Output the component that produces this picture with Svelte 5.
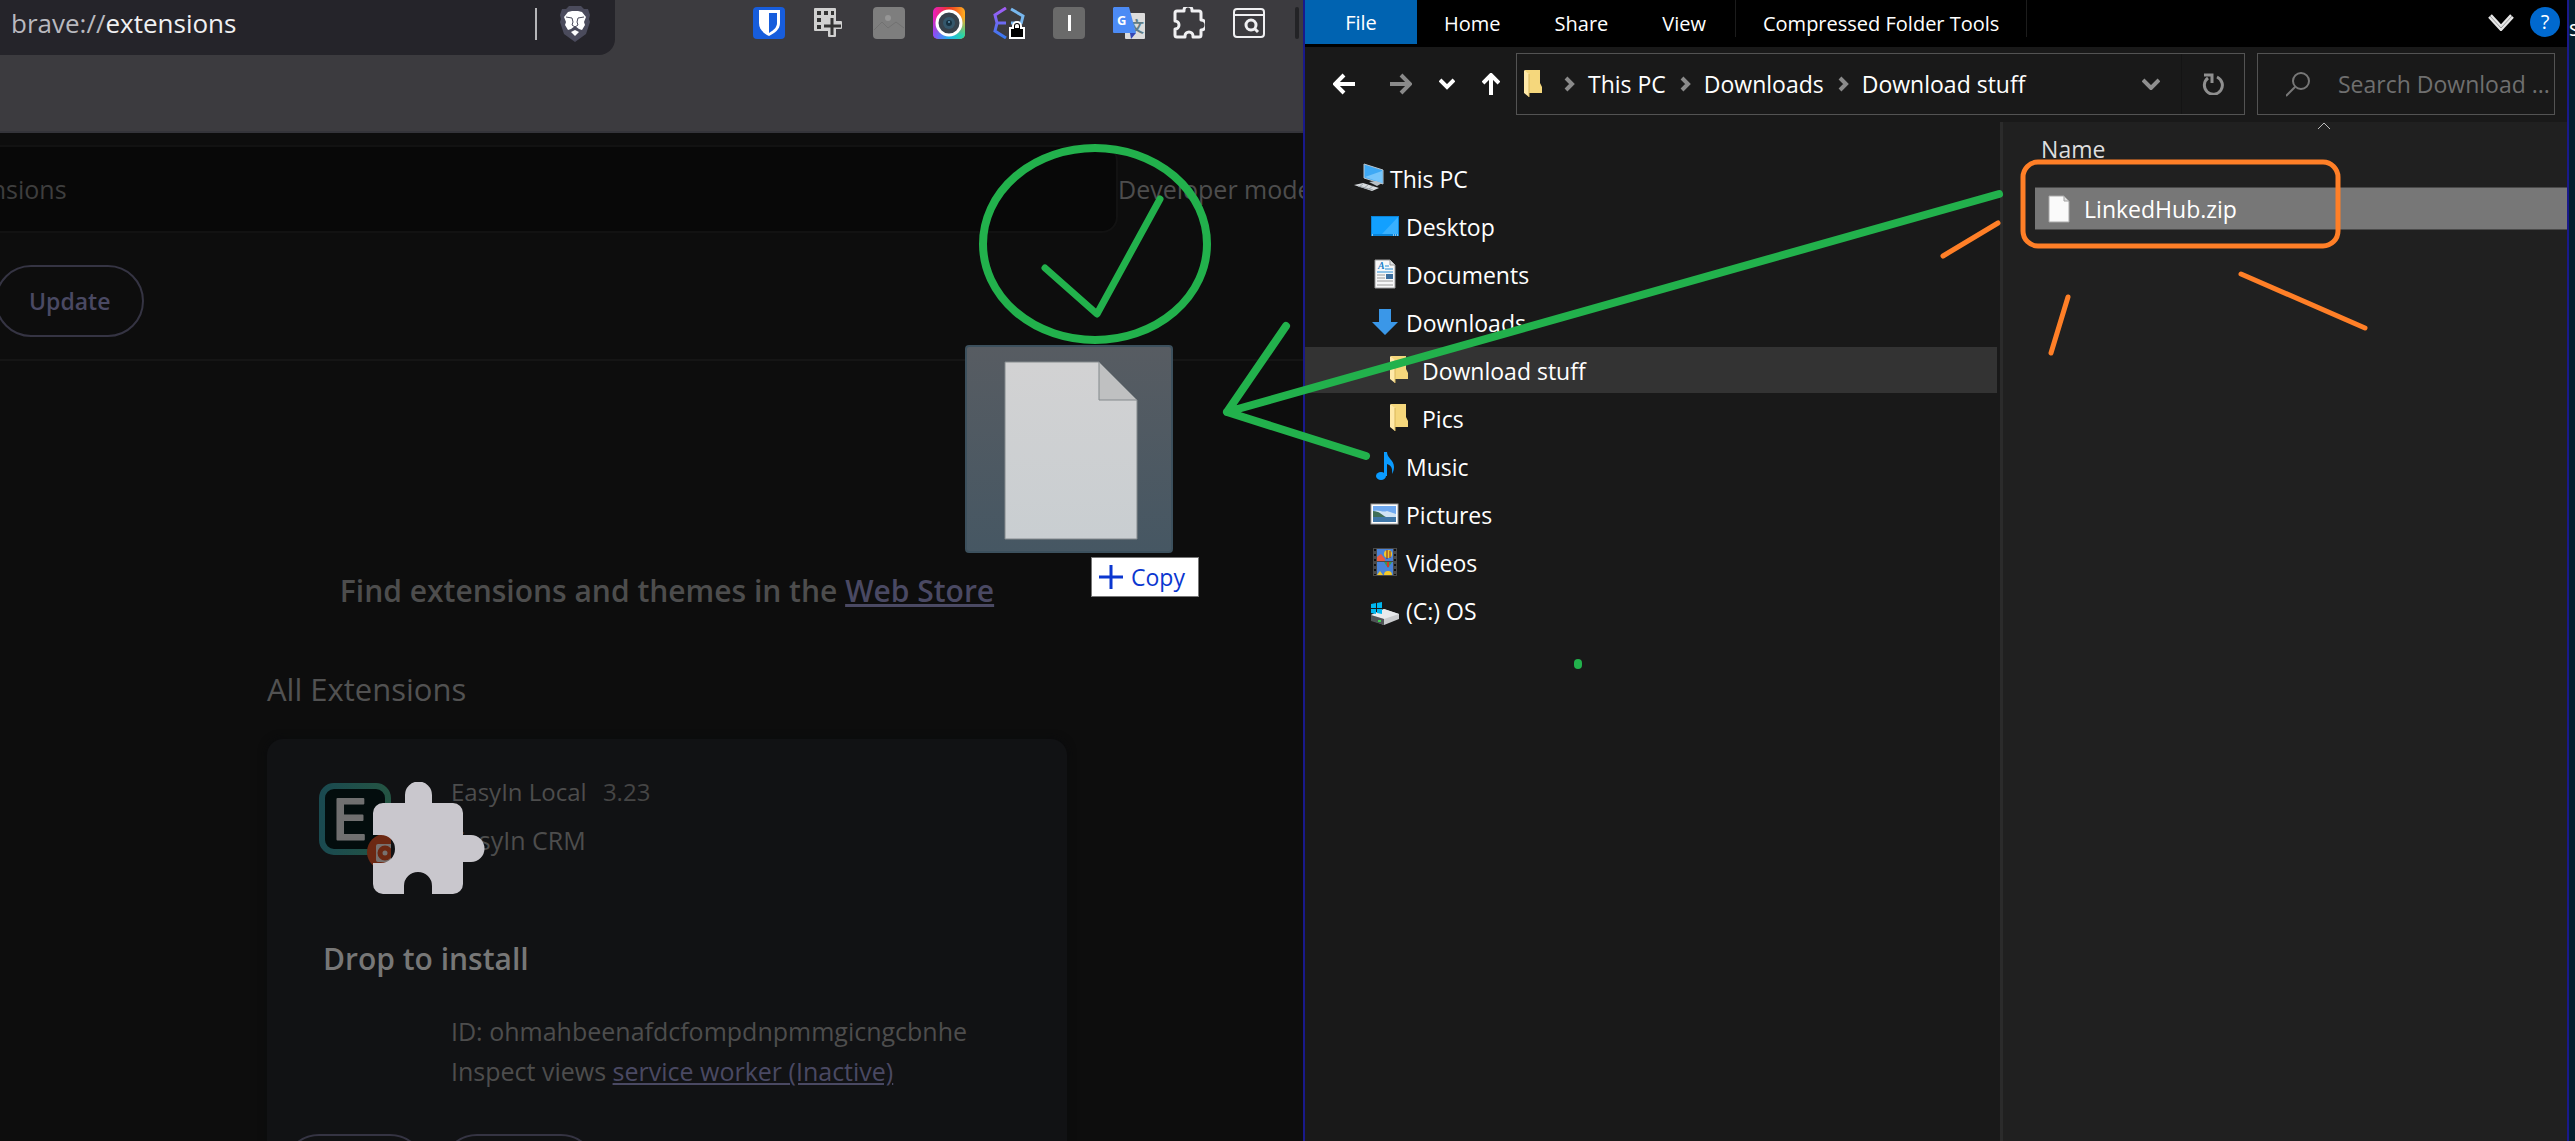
<script lang="ts">
	type TreeItem = { label: string; icon: string; level: number; selected?: boolean };

	const tree: TreeItem[] = [
		{ label: 'This PC', icon: 'pc', level: 0 },
		{ label: 'Desktop', icon: 'desktop', level: 1 },
		{ label: 'Documents', icon: 'documents', level: 1 },
		{ label: 'Downloads', icon: 'downloads', level: 1 },
		{ label: 'Download stuff', icon: 'folder', level: 2, selected: true },
		{ label: 'Pics', icon: 'folder', level: 2 },
		{ label: 'Music', icon: 'music', level: 1 },
		{ label: 'Pictures', icon: 'pictures', level: 1 },
		{ label: 'Videos', icon: 'videos', level: 1 },
		{ label: '(C:) OS', icon: 'drive', level: 1 }
	];

	const crumbs = ['This PC', 'Downloads', 'Download stuff'];
	const extensions = ['vault', 'select', 'image', 'camera', 'lock', 'bar', 'translate', 'puzzle', 'search'];
</script>

{#snippet folder()}
	<svg class="folder" width="18" height="28" viewBox="0 0 18 28">
		<path d="M1 0h15v13l2 4v6H1z" fill="#f5d77c" />
		<path d="M0 0l5 4v23l-5-4z" fill="#ffe9a8" />
		<path d="M5 4v23" stroke="#d9b75a" stroke-width="1" />
	</svg>
{/snippet}

{#snippet extensionIcon(name: string)}
	<svg width="32" height="32" viewBox="0 0 32 32" fill="none">
		{#if name === 'vault'}
			<rect width="32" height="32" rx="4" fill="#175ddc" />
			<path d="M6 3h21v13c0 6-5 10-11 13C10 26 6 22 6 16z" fill="#fff" />
			<path d="M16 6h8v10c0 4-3 7-8 10z" fill="#175ddc" />
		{:else if name === 'select'}
			<path d="M2 2h20v13h6v6h-6v8h-6v-6H2z" fill="#d0d0d0" stroke="#d0d0d0" stroke-width="2" stroke-linejoin="round" />
			<path d="M4 4h4v4H4zM11 4h4v4h-4zM18 4h3v4h-3zM4 11h4v4H4zM4 18h4v4H4z" fill="#333" />
			<path d="M19 11v17M11 19h17" stroke="#333" stroke-width="3" />
		{:else if name === 'image'}
			<rect width="32" height="32" rx="4" fill="#7e7e7e" />
			<circle cx="15" cy="11" r="3" fill="#969696" />
			<path d="M1 23l8-8 6 6 8-6 8 6" stroke="#717171" />
		{:else if name === 'camera'}
			<defs>
				<linearGradient id="rainbow-a" x1="0" y1="0" x2="1" y2="0">
					<stop offset="0" stop-color="#e91ec0" />
					<stop offset="0.5" stop-color="#ee3524" />
					<stop offset="1" stop-color="#ffb01f" />
				</linearGradient>
				<linearGradient id="rainbow-b" x1="0" y1="0" x2="1" y2="0">
					<stop offset="0" stop-color="#8a4bff" />
					<stop offset="0.5" stop-color="#1eb4ea" />
					<stop offset="1" stop-color="#27dba0" />
				</linearGradient>
				<linearGradient id="rainbow-fade" x1="0" y1="0" x2="0" y2="1">
					<stop offset="0.3" stop-color="#000" />
					<stop offset="0.9" stop-color="#fff" />
				</linearGradient>
				<mask id="rainbow-mask"><rect width="32" height="32" fill="url(#rainbow-fade)" /></mask>
			</defs>
			<rect width="32" height="32" rx="5" fill="url(#rainbow-a)" />
			<rect width="32" height="32" rx="5" fill="url(#rainbow-b)" mask="url(#rainbow-mask)" />
			<circle cx="16" cy="16" r="12" fill="#37424c" stroke="#fff" stroke-width="3" />
			<circle cx="16" cy="16" r="6" fill="#34576b" />
			<circle cx="16" cy="16" r="3" fill="#16303f" />
			<circle cx="16" cy="15" r="1" fill="#5f93b4" />
		{:else if name === 'lock'}
			<defs>
				<linearGradient id="bracket" x1="0" y1="0" x2="0" y2="1">
					<stop offset="0" stop-color="#a35cf5" />
					<stop offset="1" stop-color="#3779f0" />
				</linearGradient>
			</defs>
			<path d="M13 1L2 8l2 8-2 8 11 7M4 16h9" stroke="url(#bracket)" stroke-width="3" />
			<path d="M18 2l12 7-2 8M18 16h10" stroke="#78b7ee" stroke-width="3" />
			<path d="M20 21v-2a4 4 0 0 1 8 0v2h3v10H17V21z" fill="#000" stroke="#fff" stroke-width="2" />
			<path d="M22 21v-2a2 2 0 0 1 4 0v2z" fill="#fff" />
		{:else if name === 'bar'}
			<rect width="32" height="32" rx="4" fill="#6a6a6a" />
			<rect x="15" y="8" width="3" height="16" fill="#fff" />
		{:else if name === 'translate'}
			<rect x="12" y="6" width="20" height="26" rx="1" fill="#dcdcdc" />
			<text x="16" y="25" class="han">文</text>
			<path d="M17 26h6l-5 6z" fill="#3447b5" />
			<path d="M1 0h15l7 26H1a1 1 0 0 1-1-1V1z" fill="#4c8bf5" />
			<text x="4" y="18" class="latin">G</text>
		{:else if name === 'puzzle'}
			<path
				d="M4 4h7v-1a4 4 0 0 1 8 0v1h7a2 2 0 0 1 2 2v7a5 5 0 0 1 0 10v5a2 2 0 0 1-2 2h-6v-1a4 4 0 0 0-8 0v1H4a2 2 0 0 1-2-2v-6a4 4 0 0 0 0-8V6a2 2 0 0 1 2-2z"
				stroke="#f0f0f2"
				stroke-width="3"
				stroke-linejoin="round"
			/>
		{:else}
			<rect x="1" y="2" width="30" height="28" rx="3" stroke="#f0f0f2" stroke-width="2" />
			<path d="M1 8h30" stroke="#f0f0f2" stroke-width="2" />
			<circle cx="18" cy="18" r="5" stroke="#f0f0f2" stroke-width="3" />
			<path d="M21 21l4 4" stroke="#f0f0f2" stroke-width="3" />
		{/if}
	</svg>
{/snippet}

{#snippet treeIcon(name: string)}
	{#if name === 'folder'}
		{@render folder()}
	{:else}
		<svg width="30" height="30" viewBox="0 0 30 30" fill="none">
			{#if name === 'pc'}
				<path d="M10 1l19 6v14l-19-6z" fill="#3fa9f5" stroke="#b9c6cf" />
				<path d="M11 14L28 8v12z" fill="#76c5fb" />
				<path d="M15 19l7-1 6 2-5 3z" fill="#b8c0c6" />
				<path d="M0 22l9-2 16 5-7 3z" fill="#d8dcdf" />
				<path d="M4 23l15 4M9 21l-4 3M14 22l-4 3M19 23l-4 3" stroke="#9da5ab" />
			{:else if name === 'desktop'}
				<rect x="1" y="5" width="28" height="20" fill="#0a84d8" />
				<rect x="2" y="6" width="26" height="17" fill="#12a0ff" />
				<path d="M12 23L28 6v17z" fill="#38b0ff" />
				<path d="M2 24h1M23 24h1M25 24h1M27 24h1" stroke="#fff" />
			{:else if name === 'documents'}
				<path d="M5 1h15l5 5v23H5z" fill="#f7f8f9" stroke="#9a9a9a" />
				<path d="M20 1v5h5" fill="#dfe2e4" stroke="#9a9a9a" />
				<text x="8" y="10" class="doc-letter">A</text>
				<path d="M15 7h4M15 10h8M7 13h16" stroke="#2b8fd6" />
				<path d="M7 16h8M7 19h8M7 22h16M7 26h16" stroke="#9a9a9a" />
				<rect x="16" y="15" width="7" height="5" fill="#3c6e9e" />
			{:else if name === 'downloads'}
				<path d="M9 2h12v13h7L15 28 2 15h7z" fill="#3a97e8" />
			{:else if name === 'music'}
				<ellipse cx="11" cy="25" rx="5" ry="4" fill="#0a9bff" />
				<path d="M14 1h3c0 6 7 8 7 15 0 3-1 5-2 7 1-7-2-9-5-10v12h-3z" fill="#0a9bff" />
			{:else if name === 'pictures'}
				<rect x="1" y="5" width="27" height="20" fill="#fff" stroke="#9c9c9c" />
				<rect x="3" y="7" width="23" height="16" fill="#6fa9f0" />
				<path d="M3 12c6-2 9 2 14 0l9 3v4H3z" fill="#cfe3f5" />
				<path d="M3 12c6 0 9 4 13 6l10 1H3z" fill="#3f6f58" />
				<rect x="3" y="18" width="23" height="5" fill="#3f77a8" />
			{:else if name === 'videos'}
				<rect x="3" y="1" width="24" height="28" fill="#4a4a4a" />
				<path d="M5 2v26M25 2v26" stroke="#111" stroke-width="2" stroke-dasharray="2 3" />
				<path d="M7 2h16v12H7zM7 15h16v13H7z" fill="#4a83d8" />
				<path d="M7 10l4-3 4 5v2H7z" fill="#ea5c40" />
				<circle cx="18" cy="7" r="4" fill="#f4c92a" />
				<path d="M17 3v9M20 4v7" stroke="#7d2323" />
				<path d="M14 15h8l-4 6z" fill="#3f9a4a" />
				<path d="M18 15v5" stroke="#d23a2b" stroke-width="2" />
				<path d="M14 28a4 4 0 0 1 8 0zM7 28l3-4 3 4z" fill="#f4c92a" />
			{:else}
				<path d="M1 20l13-6 15 5v5l-15 6-13-5z" fill="#c9cbcd" />
				<path d="M1 20l13-6 15 5-15 5z" fill="#e8eaec" />
				<path d="M1 20l13 4v6L1 26z" fill="#4f5356" />
				<path d="M8 26h3" stroke="#3ccf4e" stroke-width="2" />
				<path d="M1 9l5-1v5H1zM7 8l5-1v6H7zM1 14h5v5l-5-1zM7 14h5v5l-5-1z" fill="#00b7f0" />
			{/if}
		</svg>
	{/if}
{/snippet}

<div class="desktop">
	<section class="browser">
		<header class="toolbar">
			<div class="url-bar">
				<p class="url"><span>brave://</span>extensions</p>
				<button class="shield" type="button" aria-label="Brave Shields">
					<svg width="32" height="36" viewBox="0 0 32 36">
						<path d="M10 0h12l3 3h4l2 6-1 4 1 3-4 12-11 8L5 28 1 16l1-3-1-4 2-6h4z" fill="#4b4b5c" />
						<path d="M9 6l4-1h6l4 1 4 5-2 5 1 3-3 5-3-1-4-3-4 3-3 1-3-5 1-3-2-5z" fill="#fff" />
						<path
							d="M7 11l6 1 1 4-1 3 3 2 3-2-1-3 1-4 6-1"
							fill="none"
							stroke="#4b4b5c"
							stroke-width="1"
						/>
						<path d="M16 24l4 2-4 4-4-4z" fill="#fff" />
					</svg>
				</button>
			</div>
			<div class="extension-icons">
				{#each extensions as name}
					<button type="button" aria-label={name}>{@render extensionIcon(name)}</button>
				{/each}
				<span class="divider"></span>
			</div>
		</header>

		<main class="page">
			<div class="search-row">
				<input type="search" placeholder="Search extensions" aria-label="Search extensions" />
				<span class="dev-mode">Developer mode</span>
			</div>
			<div class="actions">
				<button class="pill update" type="button">Update</button>
			</div>

			<div class="list">
				<h2>Find extensions and themes in the <a href="#store">Web Store</a></h2>
				<h3>All Extensions</h3>
				<article class="card">
					<div class="card-body">
						<svg class="logo" width="72" height="88" viewBox="0 0 72 88">
							<defs>
								<linearGradient id="logo-ring" x1="0" y1="0" x2="1" y2="0">
									<stop offset="0" stop-color="#1a4a50" />
									<stop offset="1" stop-color="#245443" />
								</linearGradient>
							</defs>
							<rect x="3" y="3" width="66" height="66" rx="12" fill="#030d0d" stroke="url(#logo-ring)" stroke-width="6" />
							<text x="13" y="56" class="logo-letter">E</text>
							<circle cx="66" cy="69" r="18" fill="#6c2812" />
							<rect x="57" y="61" width="20" height="18" rx="2" fill="#77716f" />
							<circle cx="66" cy="70" r="5" fill="#77716f" stroke="#6c2812" stroke-width="5" />
						</svg>
						<div class="details">
							<p class="name">EasyIn Local <span>3.23</span></p>
							<p class="description">EasyIn CRM</p>
							<p class="meta">ID: ohmahbeenafdcfompdnpmmgicngcbnhe</p>
							<p class="meta">Inspect views <a href="#worker">service worker (Inactive)</a></p>
						</div>
					</div>
					<div class="card-actions">
						<button class="pill" type="button" aria-label="Details"></button>
						<button class="pill" type="button" aria-label="Remove"></button>
					</div>
				</article>

				<div class="drop">
					<svg width="112" height="113" viewBox="0 0 112 113">
						<path
							d="M10 21h22V13a13 13 0 0 1 27 0v8h21a10 10 0 0 1 10 10v22h8a13 13 0 0 1 0 27h-8v22a10 10 0 0 1-10 10H59v-8a14 14 0 0 0-28 0v8H10a10 10 0 0 1-10-10V81h8a14 14 0 0 0 0-28H0V31a10 10 0 0 1 10-10z"
							fill="#c9c7cd"
						/>
					</svg>
					<strong>Drop to install</strong>
				</div>
			</div>
		</main>
	</section>

	<section class="explorer">
		<nav class="ribbon">
			<button class="file-tab" type="button">File</button>
			<button type="button">Home</button>
			<button type="button">Share</button>
			<button type="button">View</button>
			<button class="tools-tab" type="button">Compressed Folder Tools</button>
			<div class="ribbon-end">
				<button type="button" aria-label="Expand the ribbon">
					<svg width="26" height="18" viewBox="0 0 26 18" fill="none">
						<path d="M2 3l11 12L24 3" stroke="#e8e8e8" stroke-width="5" />
						<path d="M2 3l11 12L24 3" stroke="#9a9a9a" stroke-width="1" />
					</svg>
				</button>
				<button class="help" type="button">?</button>
			</div>
		</nav>

		<div class="address-row">
			<div class="nav-buttons">
				<button type="button" aria-label="Back">
					<svg width="22" height="22" viewBox="0 0 22 22"><path d="M22 11H3M11 2l-9 9 9 9" stroke="#fff" /></svg>
				</button>
				<button type="button" aria-label="Forward">
					<svg width="22" height="22" viewBox="0 0 22 22"><path d="M0 11h19M11 2l9 9-9 9" stroke="#8a8a8a" /></svg>
				</button>
				<button type="button" aria-label="Recent locations">
					<svg width="16" height="22" viewBox="0 0 16 22"><path d="M1 7l7 7 7-7" stroke="#fff" /></svg>
				</button>
				<button type="button" aria-label="Up">
					<svg width="18" height="22" viewBox="0 0 18 22"><path d="M9 22V2M1 10l8-8 8 8" stroke="#fff" /></svg>
				</button>
			</div>
			<div class="address">
				{@render folder()}
				{#each crumbs as crumb}
					<svg class="separator" width="12" height="16" viewBox="0 0 12 16"><path d="M3 2l6 6-6 6" /></svg>
					<button type="button">{crumb}</button>
				{/each}
				<button class="history" type="button" aria-label="Previous locations">
					<svg width="18" height="12" viewBox="0 0 18 12" fill="none"><path d="M1 2l8 8 8-8" stroke="#8f8f8f" stroke-width="4" /></svg>
				</button>
				<button class="refresh" type="button" aria-label="Refresh">
					<svg width="22" height="22" viewBox="0 0 22 22" fill="none">
						<path d="M15 4a9 9 0 1 1-9 1" stroke="#8f8f8f" stroke-width="3" />
						<path d="M2 2h8v8" stroke="#8f8f8f" stroke-width="3" />
					</svg>
				</button>
			</div>
			<label class="search">
				<svg width="24" height="25" viewBox="0 0 24 25" fill="none" stroke="#777" stroke-width="2">
					<circle cx="15" cy="9" r="8" />
					<path d="M9 15l-9 9" />
				</svg>
				<input type="text" placeholder="Search Download ..." aria-label="Search Download stuff" />
			</label>
		</div>

		<div class="panes">
			<ul class="tree">
				{#each tree as item}
					<li class="level-{item.level}" class:selected={item.selected}>
						{@render treeIcon(item.icon)}
						<span>{item.label}</span>
					</li>
				{/each}
			</ul>
			<div class="files">
				<svg class="sort" width="14" height="8" viewBox="0 0 14 8" fill="none"><path d="M1 7l6-6 6 6" stroke="#bbb" /></svg>
				<p class="column">Name</p>
				<div class="file">
					<svg width="22" height="28" viewBox="0 0 22 28">
						<path d="M1 1h15l5 5v21H1z" fill="#fafafa" stroke="#a9a9a9" />
						<path d="M16 1v5h5z" fill="#ddd" stroke="#a0a0a0" />
					</svg>
					<span>LinkedHub.zip</span>
				</div>
			</div>
		</div>
	</section>

	<aside class="wallpaper">s</aside>

	<div class="drag-ghost">
		<svg width="134" height="180" viewBox="0 0 134 180">
			<defs>
				<linearGradient id="paper" x1="0" y1="0" x2="0" y2="1">
					<stop offset="0" stop-color="#d2d2d3" />
					<stop offset="1" stop-color="#c9ced1" />
				</linearGradient>
			</defs>
			<path d="M1 1h94l38 38v139H1z" fill="url(#paper)" stroke="#83898c" />
			<path d="M95 1v38h38z" fill="#bfc0c1" stroke="#83898c" />
		</svg>
	</div>
	<div class="drag-tip">
		<svg width="24" height="24" viewBox="0 0 24 24"><path d="M12 0v24M0 12h24" stroke="#0b37d0" stroke-width="3" /></svg>
		Copy
	</div>

	<svg class="ink" viewBox="0 0 2575 1141" preserveAspectRatio="none">
		<g stroke="#22b14c" stroke-width="8">
			<ellipse cx="1095" cy="244" rx="112" ry="96" />
			<path d="M1045 268l52 46 63-115" stroke-width="7" />
			<path d="M1999 194L1227 412M1286 326l-59 86 139 44" />
			<path d="M1578 663v2" />
		</g>
		<g stroke="#ff7f27" stroke-width="5">
			<rect x="2023" y="162" width="315" height="84" rx="15" />
			<path d="M1943 256l55-33M2068 297l-17 56M2241 274l124 54" />
		</g>
	</svg>
</div>

<style>
	:global(body) {
		margin: 0;
		background: #0d0d0d;
	}

	.desktop {
		position: relative;
		display: grid;
		grid-template-columns: 1303fr 1266fr 6px;
		height: 100vh;
		overflow: hidden;
		font-family: 'Segoe UI', 'Open Sans', 'Noto Sans', sans-serif;
		font-size: 23px;
		color: #fff;
	}

	button,
	input {
		font: inherit;
		color: inherit;
		background: none;
		border: 0;
		padding: 0;
		box-sizing: border-box;
	}

	svg {
		display: block;
		flex: none;
	}

	p,
	h2,
	h3,
	ul {
		margin: 0;
		padding: 0;
	}

	/* browser */
	.browser {
		display: flex;
		flex-direction: column;
		min-width: 0;
		overflow: hidden;
		font-size: 25px;
	}

	.toolbar {
		display: flex;
		justify-content: space-between;
		align-items: flex-start;
		height: 131px;
		flex: none;
		background: #3c3b3f;
		border-bottom: 2px solid #34343a;
	}

	.url-bar {
		display: flex;
		align-items: center;
		justify-content: space-between;
		width: 615px;
		height: 55px;
		padding: 0 24px 8px 11px;
		box-sizing: border-box;
		background: #25242a;
		border-radius: 0 0 16px 0;
	}

	.url {
		color: #f0f0f2;
		font-size: 26px;
		line-height: 47px;
	}

	.url span {
		color: #b9b9bf;
	}

	.shield {
		padding-left: 22px;
		border-left: 2px solid #b5b5b8;
		height: 32px;
		display: flex;
		align-items: center;
	}

	.extension-icons {
		display: flex;
		gap: 28px;
		padding: 7px 4px 0 0;
	}

	.divider {
		width: 4px;
		height: 32px;
		margin-left: 2px;
		border-radius: 2px;
		background: #232326;
	}

	.latin {
		font: 700 13px 'Open Sans', sans-serif;
		fill: #fff;
	}

	.han {
		font: 700 15px 'Noto Sans CJK SC', sans-serif;
		fill: #607d86;
	}

	.page {
		flex: 1;
		min-height: 0;
		background: #0d0d0d;
		padding-top: 12px;
	}

	.search-row {
		display: flex;
		align-items: center;
		margin-left: -180px;
		white-space: nowrap;
	}

	.search-row input {
		flex: none;
		width: 1298px;
		height: 88px;
		padding: 0 33px;
		background: #080808;
		border: 2px solid #121212;
		border-radius: 16px;
	}

	.search-row input::placeholder {
		color: #3e3e3e;
		opacity: 1;
	}

	.dev-mode {
		color: #4d4d4d;
	}

	.actions {
		padding: 32px 0 22px;
		border-bottom: 2px solid #151515;
	}

	.pill {
		height: 72px;
		padding: 0 32px;
		border: 2px solid #353443;
		border-radius: 36px;
		color: #4a4963;
		font-weight: 600;
		font-size: 23px;
	}

	.update {
		margin-left: -5px;
	}

	.list {
		position: relative;
		width: 800px;
		margin-left: 267px;
		padding-top: 208px;
	}

	h2,
	h3 {
		font-size: 30px;
		line-height: 44px;
		white-space: nowrap;
	}

	h2 {
		text-align: center;
		font-weight: 600;
		color: #4d4d4d;
	}

	h3 {
		margin: 54px 0 28px;
		font-size: 31px;
		font-weight: 400;
		color: #525252;
	}

	.page a {
		color: #4a4963;
	}

	.card {
		padding: 29px 16px 24px;
		background: #111214;
		border-radius: 16px;
		box-shadow: 0 0 8px #0a0b0d;
	}

	.card-body {
		display: flex;
		gap: 60px;
		padding-left: 36px;
		color: #4d4d4d;
	}

	.logo {
		margin-top: 15px;
	}

	.logo-letter {
		font: 56px 'DejaVu Sans', sans-serif;
		fill: #707070;
		stroke: #707070;
		stroke-width: 2;
		stroke-linejoin: round;
	}

	.name,
	.description {
		line-height: 48px;
	}

	.name {
		font-size: 24px;
	}

	.name span {
		margin-left: 10px;
		color: #454545;
	}

	.description {
		margin-bottom: 147px;
	}

	.meta {
		line-height: 40px;
	}

	.card-actions {
		display: flex;
		gap: 15px;
		margin-top: 43px;
	}

	.card-actions .pill {
		width: 143px;
	}

	.card-actions .pill + .pill {
		width: 156px;
	}

	.drop {
		position: absolute;
		top: 421px;
		left: 56px;
	}

	.drop svg {
		margin-left: 50px;
	}

	.drop strong {
		display: block;
		margin-top: 42px;
		font-size: 30px;
		line-height: 44px;
		font-weight: 600;
		color: #777;
	}

	/* explorer */
	.explorer {
		display: flex;
		flex-direction: column;
		min-width: 0;
		box-sizing: border-box;
		border: solid #19198a;
		border-width: 0 2px;
		background: #191919;
	}

	.ribbon {
		display: flex;
		align-items: flex-start;
		height: 47px;
		background: #000;
		font-size: 20px;
		white-space: nowrap;
	}

	.ribbon > button {
		height: 47px;
		padding: 0 27px;
	}

	.ribbon > .file-tab {
		width: 112px;
		height: 44px;
		background: #0063b1;
	}

	.ribbon > .tools-tab {
		height: 37px;
		margin-left: 2px;
		padding-top: 10px;
		border: solid #1c1c1c;
		border-width: 0 1px;
	}

	.ribbon-end {
		display: flex;
		align-items: center;
		gap: 16px;
		margin-left: auto;
		padding: 7px 7px 0 0;
	}

	.help {
		width: 30px;
		height: 30px;
		border-radius: 50%;
		background: #0069cf;
		line-height: 30px;
	}

	.address-row {
		display: flex;
		align-items: center;
		gap: 12px;
		height: 62px;
		padding: 6px 12px 7px 28px;
	}

	.nav-buttons {
		display: flex;
		align-items: center;
		justify-content: space-between;
		width: 167px;
		margin-right: 4px;
	}

	.nav-buttons path {
		fill: none;
		stroke-width: 4;
	}

	.nav-buttons button:first-child {
		margin-right: 8px;
	}

	.address,
	.search {
		display: flex;
		align-items: center;
		height: 62px;
		box-sizing: border-box;
		border: 1px solid #535353;
	}

	.address {
		flex: 1;
		min-width: 0;
		padding-left: 7px;
		white-space: nowrap;
	}

	.separator {
		margin: 0 13px;
	}

	.address .folder {
		margin-right: 8px;
	}

	.separator path {
		fill: none;
		stroke: #8a8a8a;
		stroke-width: 4;
	}

	.history {
		margin-left: auto;
		padding-right: 21px;
	}

	.refresh {
		display: flex;
		align-items: center;
		height: 60px;
		padding: 0 20px;
		border-left: 1px solid #141414;
	}

	.search {
		width: 298px;
		gap: 28px;
		padding-left: 28px;
	}

	.search input {
		flex: 1;
		min-width: 0;
	}

	.search input::placeholder {
		color: #6f6f6f;
		opacity: 1;
	}

	.panes {
		display: flex;
		flex: 1;
		min-height: 0;
	}

	.tree {
		width: 55%;
		padding: 33px 2px 0 0;
		box-sizing: border-box;
		list-style: none;
	}

	.tree li {
		display: flex;
		align-items: center;
		gap: 6px;
		height: 46px;
		margin-bottom: 2px;
		padding-left: 49px;
	}

	.tree span {
		padding-top: 1px;
	}

	.tree .level-1 {
		padding-left: 65px;
	}

	.tree .level-2 {
		gap: 14px;
		padding-left: 85px;
	}

	.tree .selected {
		background: #333;
	}

	.doc-letter {
		font: italic 700 10px 'Liberation Serif', serif;
		fill: #1b7fc9;
	}

	.files {
		flex: 1;
		margin-left: 1px;
		background: #202020;
		border-left: 3px solid #2b2b2b;
	}

	.sort {
		margin-left: 314px;
	}

	.column {
		margin: 1px 0 20px 38px;
		line-height: 36px;
		color: #dedede;
	}

	.file {
		display: flex;
		align-items: center;
		gap: 14px;
		height: 43px;
		margin-left: 32px;
		padding-left: 13px;
		box-sizing: border-box;
		background: #777;
		border: solid #4a4a4a;
		border-width: 1px 0;
	}

	.wallpaper {
		overflow: hidden;
		padding-top: 14px;
		background: #04202f;
		font-size: 21px;
	}

	/* things floating over both windows */
	.drag-ghost {
		position: absolute;
		top: 345px;
		left: 965px;
		display: flex;
		justify-content: center;
		align-items: center;
		width: 208px;
		height: 208px;
		padding: 4px 0 0 4px;
		box-sizing: border-box;
		border: 2px solid #3c505d;
		border-radius: 4px;
		background: linear-gradient(#575c62, #465763);
	}

	.drag-tip {
		position: absolute;
		top: 557px;
		left: 1091px;
		display: flex;
		align-items: center;
		gap: 8px;
		height: 40px;
		padding: 0 13px 0 7px;
		box-sizing: border-box;
		border: 1px solid #777;
		background: #fff;
		color: #0b37d0;
	}

	.ink {
		position: absolute;
		inset: 0;
		width: 100%;
		height: 100%;
		fill: none;
		stroke-linecap: round;
		stroke-linejoin: round;
		pointer-events: none;
	}
</style>
